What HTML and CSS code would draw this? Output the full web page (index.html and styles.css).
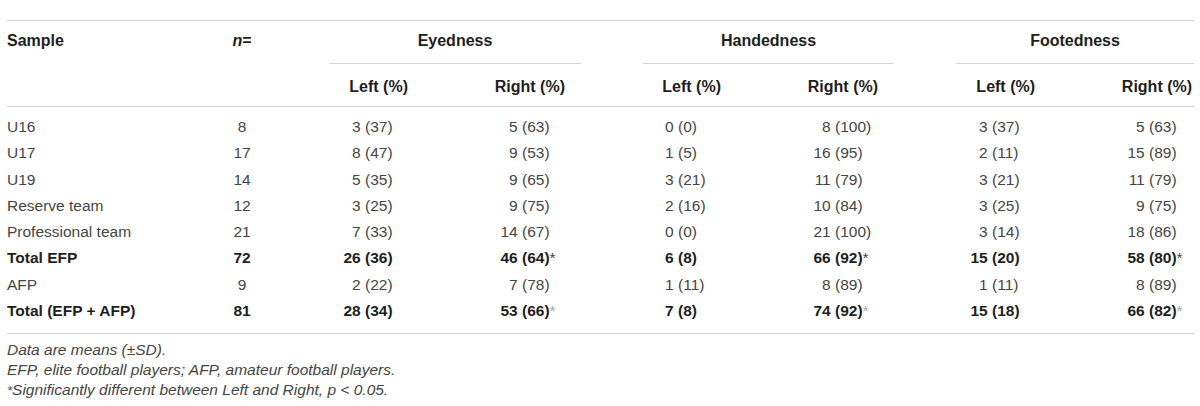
FILE: index.html
```html
<!DOCTYPE html>
<html lang="en">
<head>
<meta charset="utf-8">
<title>Lateral preference</title>
<link rel="stylesheet" href="styles.css">
</head>
<body>
<div class="wrap">
<table class="tbl">
  <colgroup>
    <col class="w-sample"><col class="w-n">
    <col class="w-v"><col class="w-v"><col class="w-v2"><col class="w-v"><col class="w-v"><col class="w-v">
  </colgroup>
  <thead>
    <tr class="hr1">
      <th rowspan="2" class="h-sample">Sample</th>
      <th rowspan="2" class="h-n"><i>n</i>=</th>
      <th colspan="2" class="grp"><div class="grp-label">Eyedness</div></th>
      <th colspan="2" class="grp"><div class="grp-label">Handedness</div></th>
      <th colspan="2" class="grp"><div class="grp-label last">Footedness</div></th>
    </tr>
    <tr class="hr2">
      <th class="sub">Left (%)</th><th class="sub">Right (%)</th>
      <th class="sub">Left (%)</th><th class="sub">Right (%)</th>
      <th class="sub">Left (%)</th><th class="sub">Right (%)</th>
    </tr>
  </thead>
  <tbody>
    <tr class="first">
      <td class="s">U16</td><td class="n">8</td>
      <td class="v"><span class="a">3</span><span class="b">(37)</span></td>
      <td class="v"><span class="a">5</span><span class="b">(63)</span></td>
      <td class="v"><span class="a">0</span><span class="b">(0)</span></td>
      <td class="v"><span class="a">8</span><span class="b">(100)</span></td>
      <td class="v"><span class="a">3</span><span class="b">(37)</span></td>
      <td class="v"><span class="a">5</span><span class="b">(63)</span></td>
    </tr>
    <tr>
      <td class="s">U17</td><td class="n">17</td>
      <td class="v"><span class="a">8</span><span class="b">(47)</span></td>
      <td class="v"><span class="a">9</span><span class="b">(53)</span></td>
      <td class="v"><span class="a">1</span><span class="b">(5)</span></td>
      <td class="v"><span class="a">16</span><span class="b">(95)</span></td>
      <td class="v"><span class="a">2</span><span class="b">(11)</span></td>
      <td class="v"><span class="a">15</span><span class="b">(89)</span></td>
    </tr>
    <tr>
      <td class="s">U19</td><td class="n">14</td>
      <td class="v"><span class="a">5</span><span class="b">(35)</span></td>
      <td class="v"><span class="a">9</span><span class="b">(65)</span></td>
      <td class="v"><span class="a">3</span><span class="b">(21)</span></td>
      <td class="v"><span class="a">11</span><span class="b">(79)</span></td>
      <td class="v"><span class="a">3</span><span class="b">(21)</span></td>
      <td class="v"><span class="a">11</span><span class="b">(79)</span></td>
    </tr>
    <tr>
      <td class="s">Reserve team</td><td class="n">12</td>
      <td class="v"><span class="a">3</span><span class="b">(25)</span></td>
      <td class="v"><span class="a">9</span><span class="b">(75)</span></td>
      <td class="v"><span class="a">2</span><span class="b">(16)</span></td>
      <td class="v"><span class="a">10</span><span class="b">(84)</span></td>
      <td class="v"><span class="a">3</span><span class="b">(25)</span></td>
      <td class="v"><span class="a">9</span><span class="b">(75)</span></td>
    </tr>
    <tr>
      <td class="s">Professional team</td><td class="n">21</td>
      <td class="v"><span class="a">7</span><span class="b">(33)</span></td>
      <td class="v"><span class="a">14</span><span class="b">(67)</span></td>
      <td class="v"><span class="a">0</span><span class="b">(0)</span></td>
      <td class="v"><span class="a">21</span><span class="b">(100)</span></td>
      <td class="v"><span class="a">3</span><span class="b">(14)</span></td>
      <td class="v"><span class="a">18</span><span class="b">(86)</span></td>
    </tr>
    <tr class="bold">
      <td class="s">Total EFP</td><td class="n">72</td>
      <td class="v"><span class="a">26</span><span class="b">(36)</span></td>
      <td class="v"><span class="a">46</span><span class="b">(64)<span class="ast">*</span></span></td>
      <td class="v"><span class="a">6</span><span class="b">(8)</span></td>
      <td class="v"><span class="a">66</span><span class="b">(92)<span class="ast">*</span></span></td>
      <td class="v"><span class="a">15</span><span class="b">(20)</span></td>
      <td class="v"><span class="a">58</span><span class="b">(80)<span class="ast">*</span></span></td>
    </tr>
    <tr>
      <td class="s">AFP</td><td class="n">9</td>
      <td class="v"><span class="a">2</span><span class="b">(22)</span></td>
      <td class="v"><span class="a">7</span><span class="b">(78)</span></td>
      <td class="v"><span class="a">1</span><span class="b">(11)</span></td>
      <td class="v"><span class="a">8</span><span class="b">(89)</span></td>
      <td class="v"><span class="a">1</span><span class="b">(11)</span></td>
      <td class="v"><span class="a">8</span><span class="b">(89)</span></td>
    </tr>
    <tr class="bold last">
      <td class="s">Total (EFP + AFP)</td><td class="n">81</td>
      <td class="v"><span class="a">28</span><span class="b">(34)</span></td>
      <td class="v"><span class="a">53</span><span class="b">(66)<span class="ast light">*</span></span></td>
      <td class="v"><span class="a">7</span><span class="b">(8)</span></td>
      <td class="v"><span class="a">74</span><span class="b">(92)<span class="ast light">*</span></span></td>
      <td class="v"><span class="a">15</span><span class="b">(18)</span></td>
      <td class="v"><span class="a">66</span><span class="b">(82)<span class="ast light">*</span></span></td>
    </tr>
  </tbody>
</table>
<div class="notes">
  <p>Data are means (±SD).</p>
  <p>EFP, elite football players; AFP, amateur football players.</p>
  <p><span class="fn-ast">*</span>Significantly different between Left and Right, p &lt; 0.05.</p>
</div>
</div>
</body>
</html>
```

FILE: styles.css
```css
html, body {
  margin: 0;
  padding: 0;
  background: #ffffff;
}

body {
  font-family: "Liberation Sans", Arial, Helvetica, sans-serif;
  font-size: 15.5px;
  color: #454545;
}

.wrap {
  padding: 20px 0 0 7px;
}

.tbl {
  width: 1187px;
  table-layout: fixed;
  border-collapse: collapse;
  border-top: 1px solid #d4d4d4;
  border-bottom: 1px solid #d4d4d4;
}

.w-sample { width: 193px; }
.w-n { width: 53px; }
.w-v { width: 157px; }
.w-v2 { width: 156px; }

th {
  font-size: 16px;
  font-weight: bold;
  color: #1e1e1e;
  line-height: 20px;
  padding: 0;
}

.h-sample {
  text-align: left;
  vertical-align: top;
  padding-top: 10px;
  border-bottom: 1px solid #d4d4d4;
}

.h-n {
  text-align: center;
  vertical-align: top;
  padding: 10px 0 0 31px;
  border-bottom: 1px solid #d4d4d4;
}

.grp {
  vertical-align: top;
}

.grp-label {
  margin: 0 -14px 0 76px;
  padding: 10px 0 12px;
  border-bottom: 1px solid #d4d4d4;
  text-align: center;
}

.grp-label.last {
  margin-right: 0;
}

.sub {
  text-align: right;
  padding: 13px 2px 9px 0;
  border-bottom: 1px solid #d4d4d4;
}

td {
  padding: 0;
  line-height: 26.3px;
  white-space: nowrap;
}

tr.first td { padding-top: 7px; }
tr.last td { padding-bottom: 9px; }

.s { text-align: left; }

.n {
  text-align: center;
  padding-left: 31px;
}

.v {
  text-align: right;
  padding-right: 17px;
}

.v .b {
  display: inline-block;
  width: 28px;
  margin-left: 4.3px;
  text-align: left;
  white-space: nowrap;
}

tr.bold td {
  font-weight: bold;
  color: #1e1e1e;
}

.ast {
  font-weight: normal;
  color: #454545;
}

.ast.light {
  color: #a6a6a6;
}

.notes {
  margin-top: 6px;
  font-style: italic;
  color: #454545;
}

.notes p {
  margin: 0;
  line-height: 20px;
}

.fn-ast {
  font-size: 13px;
}
```
